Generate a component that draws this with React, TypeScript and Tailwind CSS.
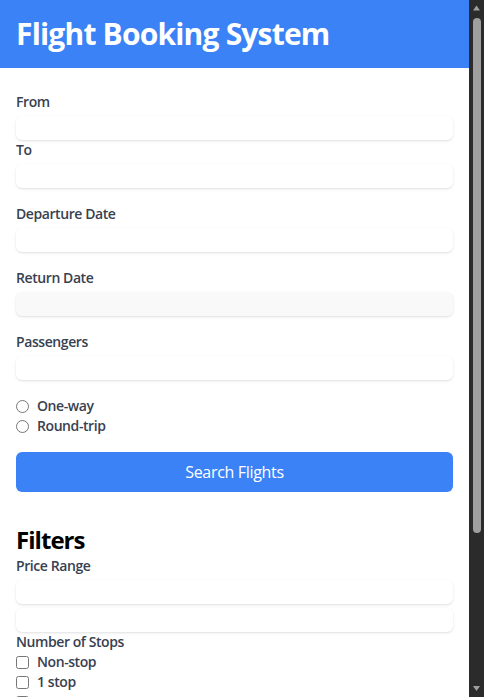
import React from "react";

const labelCls = "block text-sm font-semibold text-[#374151] tracking-[-0.03em]";
const inputCls = "mt-1 block w-full rounded-md bg-white shadow-sm h-6 outline-none";

function Field({ label, disabled }: { label: string; disabled?: boolean }) {
  return (
    <div>
      <label className={labelCls}>{label}</label>
      <input
        type="text"
        className={
          disabled
            ? "mt-1 block w-full rounded-md bg-[#f9f9f9] shadow-sm h-6 outline-none"
            : inputCls
        }
      />
    </div>
  );
}

function Check({ label, type }: { label: string; type: "radio" | "checkbox" }) {
  return (
    <label className="flex items-center h-5 text-sm font-semibold text-[#374151] tracking-[-0.03em]">
      <input
        type={type}
        name={type === "radio" ? "trip" : undefined}
        className="m-0 w-[13px] h-[13px]"
      />
      <span className="ml-2">{label}</span>
    </label>
  );
}

function ScrollBar() {
  return (
    <div className="fixed right-0 top-0 h-screen w-[15px] bg-[#2b2b2b] flex flex-col items-center">
      <svg width="15" height="17" viewBox="0 0 15 17" className="shrink-0">
        <path d="M4 10.5 L7.5 5.5 L11 10.5 Z" fill="#9f9f9f" />
      </svg>
      <div className="w-[8px] h-[515px] rounded-full bg-[#9f9f9f] mt-px" />
      <div className="flex-1" />
      <svg width="15" height="17" viewBox="0 0 15 17" className="shrink-0">
        <path d="M4 6 L7.5 11 L11 6 Z" fill="#9f9f9f" />
      </svg>
    </div>
  );
}

export default function App() {
  return (
    <div className="min-h-screen bg-white pr-[15px] font-['Open_Sans',sans-serif] tracking-[-0.02em]">
      <header className="bg-[#3b82f6] p-4">
        <h1 className="text-3xl font-bold text-white leading-9 tracking-[-0.027em]">
          Flight Booking System
        </h1>
      </header>
      <main className="px-4 pt-6 pb-6">
        <form className="flex flex-col gap-4" onSubmit={(e) => e.preventDefault()}>
          <div>
            <Field label="From" />
            <Field label="To" />
          </div>
          <Field label="Departure Date" />
          <Field label="Return Date" disabled />
          <Field label="Passengers" />
          <div>
            <Check type="radio" label="One-way" />
            <Check type="radio" label="Round-trip" />
          </div>
          <button
            type="submit"
            className="w-full rounded-md bg-[#3b82f6] py-2 text-base text-white"
          >
            Search Flights
          </button>
        </form>

        <section className="mt-8">
          <h2 className="text-2xl font-bold text-black leading-8 tracking-[-0.04em]">Filters</h2>
          <label className={labelCls}>Price Range</label>
          <input type="text" className={inputCls} />
          <input type="text" className={inputCls} />
          <div>
            <label className={labelCls}>Number of Stops</label>
            <Check type="checkbox" label="Non-stop" />
            <Check type="checkbox" label="1 stop" />
            <Check type="checkbox" label="2+ stops" />
          </div>
          <div className="mt-4">
            <label className={labelCls}>Airlines</label>
            <Check type="checkbox" label="Delta" />
            <Check type="checkbox" label="United" />
            <Check type="checkbox" label="American" />
          </div>
        </section>

        <section className="mt-8">
          <h2 className="text-2xl font-bold text-black leading-8">Search Results</h2>
        </section>
      </main>
      <ScrollBar />
    </div>
  );
}
